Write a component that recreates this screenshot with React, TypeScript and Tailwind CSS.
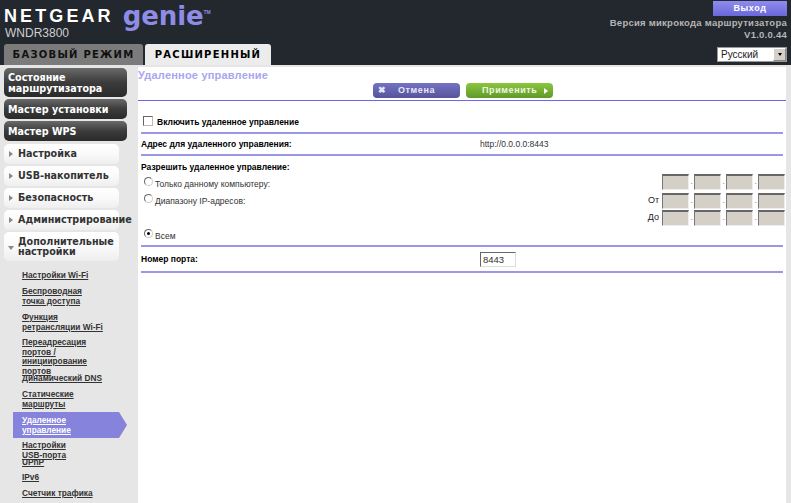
import React from 'react'

const darkBtn = 'mx-1 mb-[2px] rounded-[5px] bg-gradient-to-b from-[#6a6a6a] via-[#3c3c3c] to-[#2a2a2a] pl-1 pr-1 text-[9.6px] font-bold leading-[11px] text-white flex items-center'
const lightBtn = 'mx-1 mb-[2px] rounded-[5px] bg-gradient-to-b from-[#ffffff] via-[#fafafa] to-[#eeeeee] text-[9.6px] font-bold leading-[10px] text-[#333] flex items-center'
const subLink = "block font-['Liberation_Sans',sans-serif] text-[8.3px] font-bold leading-[10px] underline text-[#333] pl-[22px] pr-1 whitespace-nowrap"
const btnLabel = "font-['Liberation_Sans',sans-serif] text-[9px] font-bold tracking-[0.6px]"

function LightItem({ label, open }: { label: React.ReactNode; open?: boolean }) {
  return (
    <div className={`${lightBtn} ${open ? 'h-[29px]' : 'h-[20px]'}`}>
      <span className="w-[14px] flex justify-center shrink-0">
        {open
          ? <span className="mt-[3px] border-x-[3px] border-t-[4px] border-x-transparent border-t-[#888]" />
          : <span className="border-y-[3px] border-l-[4px] border-y-transparent border-l-[#888]" />}
      </span>
      <span className="whitespace-nowrap">{label}</span>
    </div>
  )
}

function IpBoxes({ label }: { label?: string }) {
  return (
    <div className="flex items-center justify-end h-[17px]">
      {label && <span className="text-[9px] mr-[3px] text-[#222]">{label}</span>}
      {[0, 1, 2, 3].map(i => (
        <React.Fragment key={i}>
          {i > 0 && <span className="w-[5px] text-center text-[8px] leading-[16px] text-[#555]">.</span>}
          <div className="w-[27px] h-[16px] bg-[#d4d0c8] border border-t-2 border-t-[#666] border-l-[#777] border-r-[#eee] border-b-[#eee]" />
        </React.Fragment>
      ))}
    </div>
  )
}

function Radio({ checked }: { checked?: boolean }) {
  return (
    <span className="inline-flex w-[9px] h-[9px] -mt-[5px] rounded-full bg-white border border-t-[#666] border-l-[#666] border-r-[#ccc] border-b-[#ccc] items-center justify-center shrink-0">
      {checked && <span className="w-[3px] h-[3px] rounded-full bg-black" />}
    </span>
  )
}

const rule = 'h-[2px] bg-[#9a98e6] mx-[3px]'

export default function App() {
  return (
    <div className="w-[791px] h-[503px] overflow-hidden bg-[#e6e6e6] flex flex-col font-['Liberation_Sans',sans-serif]">
      {/* header */}
      <div className="h-[65px] shrink-0 bg-[#22282d] flex justify-between">
        <div className="flex flex-col pl-[4px]">
          <div className="flex items-start h-[28px]">
            <span className="mt-[7px] text-[18px] leading-[18px] font-bold tracking-[3.1px] text-white">NETGEAR</span>
            <span className="mt-[1px] ml-[9px] text-[26px] leading-[30px] font-bold text-[#8f8ce6] font-['DejaVu_Sans',sans-serif] tracking-[-0.1px]">genie</span>
            <span className="mt-[10px] text-[5px] leading-[5px] font-bold text-[#8f8ce6]">TM</span>
          </div>
          <div className="text-[12px] leading-[11px] text-[#cfcfcf] h-[13px] ml-[1px]">WNDR3800</div>
          <div className="flex gap-[2px] mt-[3px]">
            <div className="w-[139px] h-[21px] rounded-t-[3px] bg-[#7b7b7b] text-[#111] text-[10px] leading-[22px] font-bold tracking-[1.25px] text-center font-['DejaVu_Sans',sans-serif]">БАЗОВЫЙ РЕЖИМ</div>
            <div className="w-[126px] h-[21px] rounded-t-[3px] bg-[#ececec] text-black text-[10px] leading-[22px] font-bold tracking-[1.25px] text-center font-['DejaVu_Sans',sans-serif]">РАСШИРЕННЫЙ</div>
          </div>
        </div>
        <div className="flex flex-col items-end pr-[4px] pt-[1px]">
          <div className={`w-[74px] h-[15px] bg-gradient-to-b from-[#8f8cf0] to-[#6a68d8] text-white leading-[15px] text-center ${btnLabel}`}>Выход</div>
          <div className="mt-[1px] text-right text-[#b5b5b5] text-[9.5px] leading-[11.5px] font-bold tracking-[0.25px]">
            Версия микрокода маршрутизатора<br />V1.0.0.44
          </div>
          <div className="mt-[7px] w-[70px] h-[15px] bg-white border border-[#999] flex items-center justify-between">
            <span className="text-[10px] text-[#222] pl-[3px] leading-[13px]">Русский</span>
            <span className="w-[13px] h-[13px] bg-[#d4d0c8] border border-[#888] border-t-white border-l-white flex items-center justify-center">
              <span className="border-x-[2.5px] border-t-[3px] border-x-transparent border-t-black" />
            </span>
          </div>
        </div>
      </div>

      <div className="flex flex-1 min-h-0 pt-[2px]">
        {/* sidebar */}
        <div className="w-[138px] shrink-0 pt-[1px] font-['DejaVu_Sans',sans-serif]">
          <div className={`${darkBtn} h-[29px] w-[123px]`}>Состояние<br />маршрутизатора</div>
          <div className={`${darkBtn} h-[20px] w-[123px]`}>Мастер установки</div>
          <div className={`${darkBtn} h-[20px] w-[123px] mb-[3px]`}>Мастер WPS</div>
          <div className="w-[123px] flex flex-col">
            <LightItem label="Настройка" />
            <LightItem label="USB-накопитель" />
            <LightItem label="Безопасность" />
            <LightItem label="Администрирование" />
            <LightItem open label={<>Дополнительные<br />настройки</>} />
          </div>
          <div className="w-[127px] pt-[7px] flex flex-col">
            <a className={`${subLink} mb-[6px]`}>Настройки Wi-Fi</a>
            <a className={`${subLink} mb-[6px]`}>Беспроводная<br />точка доступа</a>
            <a className={`${subLink} mb-[6px]`}>Функция<br />ретрансляции Wi-Fi</a>
            <a className={`${subLink} !leading-[9.5px]`}>Переадресация<br />портов /<br />инициирование<br />портов</a>
            <a className={`${subLink} -mt-[3px] mb-[6px]`}>Динамический DNS</a>
            <a className={`${subLink} mb-[3px]`}>Статические<br />маршруты</a>
            <a className={`${subLink} ml-[13px] !pl-[9px] h-[26px] pb-[1px] flex items-center bg-[#8583db] !text-white [clip-path:polygon(0_0,93%_0,100%_50%,93%_100%,0_100%)] w-[114px] mb-[2px]`}><span>Удаленное<br />управление</span></a>
            <a className={subLink}>Настройки<br />USB-порта</a>
            <a className={`${subLink} -mt-[3px] mb-[5px]`}>UPnP</a>
            <a className={`${subLink} mb-[6px]`}>IPv6</a>
            <a className={subLink}>Счетчик трафика</a>
          </div>
        </div>

        {/* content */}
        <div className="w-[648px] shrink-0 bg-white text-[8.5px] text-[#111]">
          <div className="h-[33px]">
            <div className="text-[11px] leading-[13px] font-bold text-[#a8a6f0] pt-[2px] tracking-[0.2px]">Удаленное управление</div>
            <div className="flex gap-[6px] ml-[235px] mt-[1px]">
              <div className={`w-[87px] h-[15px] rounded-[4px] bg-gradient-to-b from-[#7472c4] to-[#565499] text-[#e8e8f8] flex items-center ${btnLabel}`}>
                <span className="w-[25px] pl-[5px] text-[9px]">✖</span><span>Отмена</span>
              </div>
              <div className={`w-[87px] h-[15px] rounded-[4px] bg-gradient-to-b from-[#8cc63f] to-[#5f9a2a] text-[#f0f5e0] flex items-center ${btnLabel}`}>
                <span className="pl-[16px]">Применить</span>
                <span className="ml-[7px] border-y-[3px] border-l-[4px] border-y-transparent border-l-white" />
              </div>
            </div>
          </div>
          <div className="h-[1px] bg-[#6b68e8]" />
          <div className="h-[2px]" />

          <div className="h-[29px] flex items-center pl-[5px] pt-[9px]">
            <span className="w-[10px] h-[10px] bg-white border border-[#666] border-r-[#bbb] border-b-[#bbb] mr-[4px] -mt-[3px]" />
            <span className="font-bold text-black">Включить удаленное управление</span>
          </div>
          <div className={rule} />
          <div className="h-[20px] flex items-center pl-[3px]">
            <span className="w-[339px] font-bold text-black">Адрес для удаленного управления:</span>
            <span className="text-[#333]">http://0.0.0.0:8443</span>
          </div>
          <div className={rule} />

          <div className="pl-[3px] pt-[6px] h-[17px] font-bold text-black leading-[11px]">Разрешить удаленное управление:</div>
          <div className="flex justify-between pr-[1px]">
            <div className="pl-[6px] text-[#333] pt-[2px]">
              <div className="h-[17px] flex items-center gap-[2px]"><Radio /><span className="mt-[1px]">Только данному компьютеру:</span></div>
              <div className="h-[17px] flex items-center gap-[2px]"><Radio /><span className="mt-[1px]">Диапазону IP-адресов:</span></div>
            </div>
            <div>
              <IpBoxes />
              <div className="h-[2px]" />
              <IpBoxes label="От" />
              <IpBoxes label="До" />
            </div>
          </div>
          <div className="h-[19px] pl-[6px] flex items-center gap-[2px] text-[#333]"><Radio checked /><span className="mt-[1px]">Всем</span></div>
          <div className={rule} />
          <div className="h-[24px] flex items-center pl-[3px]">
            <span className="w-[339px] font-bold text-black mt-[1px]">Номер порта:</span>
            <div className="w-[36px] h-[15px] border border-t-[#666] border-l-[#666] border-r-[#ddd] border-b-[#ddd] text-[9.5px] leading-[13px] pl-[2px] text-[#333]">8443</div>
          </div>
          <div className={rule} />
        </div>
      </div>
    </div>
  )
}
